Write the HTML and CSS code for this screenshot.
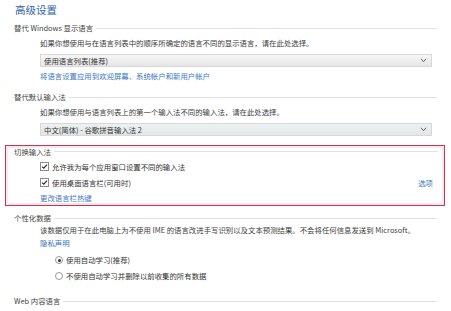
FILE: index.html
```html
<!DOCTYPE html>
<html lang="zh-CN">
<head>
<meta charset="utf-8">
<link rel="stylesheet" href="styles.css">
</head>
<body>
<div class="page">
  <div class="title">高级设置</div>

  <div class="section-head s1"><span>替代 Windows 显示语言</span><i class="rule"></i></div>
  <div class="desc d1">如果你想使用与在语言列表中的顺序所确定的语言不同的显示语言，请在此处选择。</div>
  <div class="select sel1"><span>使用语言列表(推荐)</span><svg class="chev" viewBox="0 0 8 6" width="7" height="5"><path d="M1 1 L4 4.5 L7 1" fill="none" stroke="#666" stroke-width="1.2"/></svg></div>
  <div class="link l1">将语言设置应用到欢迎屏幕、系统帐户和新用户帐户</div>

  <div class="section-head s2"><span>替代默认输入法</span><i class="rule"></i></div>
  <div class="desc d2">如果你想使用与语言列表上的第一个输入法不同的输入法，请在此处选择。</div>
  <div class="select sel2"><span>中文(简体) - 谷歌拼音输入法 2</span><svg class="chev" viewBox="0 0 8 6" width="7" height="5"><path d="M1 1 L4 4.5 L7 1" fill="none" stroke="#666" stroke-width="1.2"/></svg></div>

  <div class="redbox">
    <div class="section-head s3"><span>切换输入法</span><i class="rule"></i></div>
    <div class="check c1"><span class="box"><svg viewBox="0 0 8 8" width="7" height="7"><path d="M1.3 4.2 L3.2 6 L6.8 1.8" fill="none" stroke="#222" stroke-width="1.3"/></svg></span>允许我为每个应用窗口设置不同的输入法</div>
    <div class="check c2"><span class="box"><svg viewBox="0 0 8 8" width="7" height="7"><path d="M1.3 4.2 L3.2 6 L6.8 1.8" fill="none" stroke="#222" stroke-width="1.3"/></svg></span><span class="grow">使用桌面语言栏(可用时)</span><span class="link opt">选项</span></div>
    <div class="link l2">更改语言栏热键</div>
  </div>

  <div class="section-head s4"><span>个性化数据</span><i class="rule"></i></div>
  <div class="desc d3">该数据仅用于在此电脑上为不使用 IME 的语言改进手写识别以及文本预测结果。不会将任何信息发送到 Microsoft。</div>
  <div class="link l3">隐私声明</div>
  <div class="radio r1"><span class="dot on"></span>使用自动学习(推荐)</div>
  <div class="radio r2"><span class="dot"></span>不使用自动学习并删除以前收集的所有数据</div>

  <div class="section-head s5"><span>Web 内容语言</span><i class="rule"></i></div>
</div>
</body>
</html>
```

FILE: styles.css
```css
html, body {
  margin: 0;
  padding: 0;
  background: #ffffff;
}
body {
  width: 451px;
  height: 311px;
  overflow: hidden;
  font-family: "Noto Sans CJK SC", "Noto Sans", "Liberation Sans", sans-serif;
  font-size: 7.4px;
  color: #3a3a3a;
}
.page {
  display: flex;
  flex-direction: column;
  padding-top: 4px;
}
.title {
  height: 12px;
  line-height: 12px;
  margin-left: 15px;
  font-size: 10.5px;
  color: #2d62a8;
}
.section-head {
  display: flex;
  align-items: center;
  height: 10px;
  line-height: 10px;
  padding-left: 14px;
  margin-right: 14px;
  gap: 3px;
  color: #444;
}
.section-head .rule {
  flex: 1;
  height: 1px;
  background: #e2e2e2;
}
.s1 { margin-top: 7px; }
.s2 { margin-top: 11px; }
.s4 { margin-top: 7px; }
.s5 { margin-top: 15px; }
.desc {
  height: 10px;
  line-height: 10px;
  margin-left: 40px;
  white-space: nowrap;
  color: #3c3c3c;
}
.d1, .d2 { margin-top: 5px; }
.d3 { margin-top: 2px; }
.select {
  display: flex;
  align-items: center;
  justify-content: space-between;
  box-sizing: border-box;
  height: 13px;
  margin-top: 6px;
  margin-left: 40px;
  margin-right: 19px;
  padding: 0 4px 0 3px;
  border: 1px solid #d8d8d8;
  background: linear-gradient(#f6f6f6, #e6e6e6);
  color: #333;
}
.sel2 { background: linear-gradient(#eef1f1, #e1e6e6); }
.link {
  color: #3a78c0;
  white-space: nowrap;
}
.l1 {
  height: 10px;
  line-height: 10px;
  margin-top: 4px;
  margin-left: 40px;
}
.redbox {
  display: flex;
  flex-direction: column;
  box-sizing: border-box;
  margin: 9px 6px 0 5px;
  height: 61px;
  border: 1.5px solid #c9354e;
  box-shadow: inset 0 0 0 2px #fbe8ec;
}
.redbox .section-head {
  padding-left: 8px;
  margin-right: 6px;
  margin-top: 0.5px;
}
.check {
  display: flex;
  align-items: center;
  height: 10px;
  line-height: 10px;
  margin-left: 34px;
  margin-right: 10px;
  color: #333;
}
.c1 { margin-top: 5px; }
.c2 { margin-top: 6px; }
.check .box {
  display: flex;
  align-items: center;
  justify-content: center;
  width: 7px;
  height: 7px;
  border: 1px solid #8a8a8a;
  background: #fff;
  margin-right: 3px;
}
.grow { flex: 1; }
.opt { margin-right: 1px; }
.l2 {
  height: 10px;
  line-height: 10px;
  margin-top: 5px;
  margin-left: 34px;
}
.l3 {
  height: 10px;
  line-height: 10px;
  margin-top: 3px;
  margin-left: 40px;
}
.radio {
  display: flex;
  align-items: center;
  height: 10px;
  line-height: 10px;
  margin-left: 55px;
  color: #333;
}
.r1 { margin-top: 7px; }
.r2 { margin-top: 6px; }
.dot {
  position: relative;
  width: 6px;
  height: 6px;
  border: 1px solid #999;
  border-radius: 50%;
  margin-right: 3px;
  background: #fff;
}
.dot.on::after {
  content: "";
  position: absolute;
  left: 1.5px;
  top: 1.5px;
  width: 3px;
  height: 3px;
  border-radius: 50%;
  background: #333;
}
```
